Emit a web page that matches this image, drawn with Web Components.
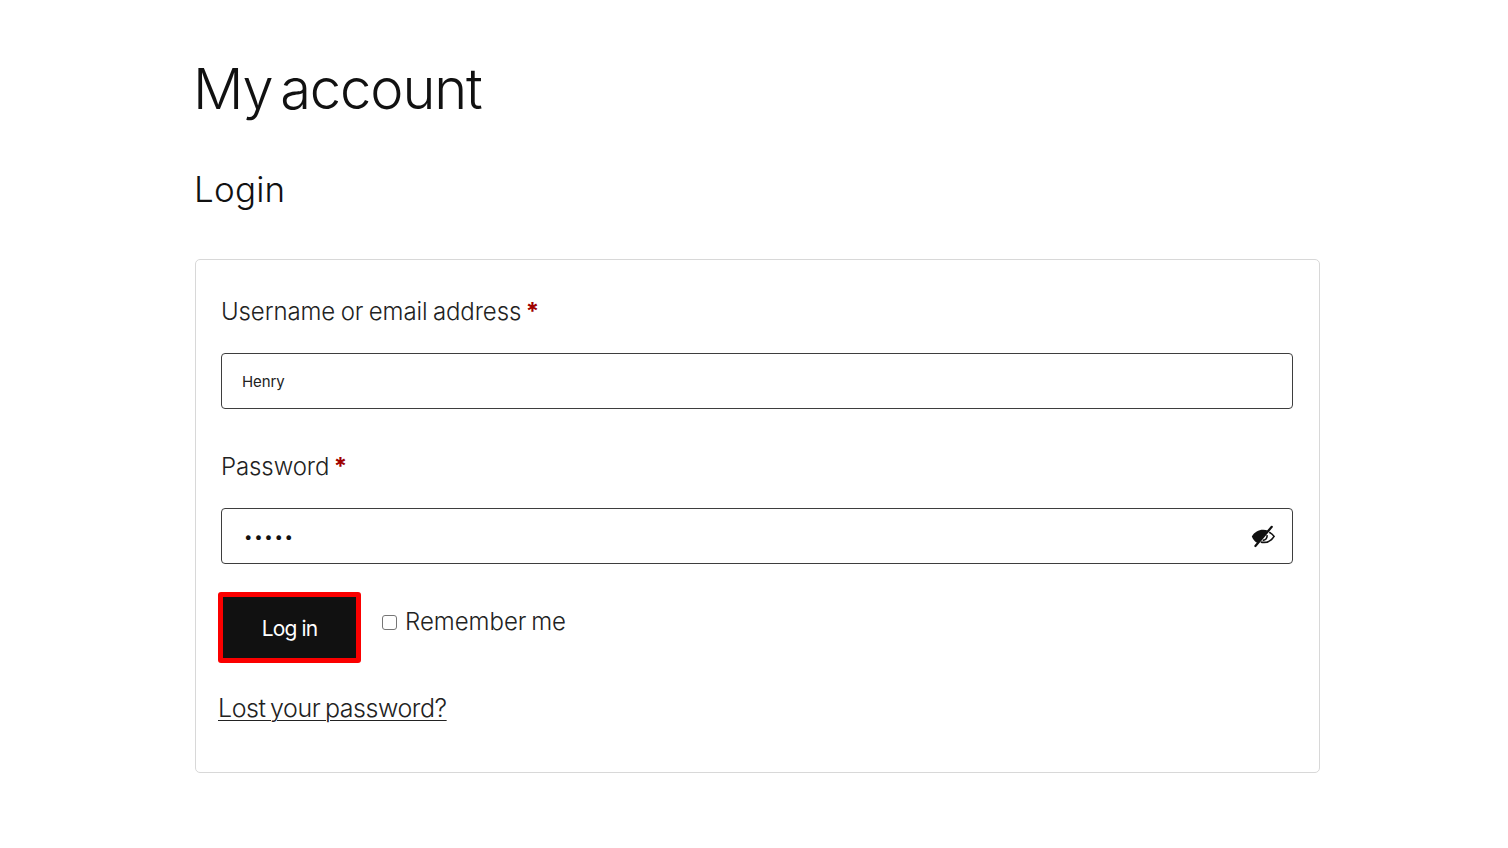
<!DOCTYPE html>
<html lang="en">
<head>
<meta charset="utf-8">
<title>My account</title>
<style>
    html, body { margin: 0; background: #fff; }
    body { font-family: Inter, "Liberation Sans", sans-serif; color: #111; }
</style>
</head>
<body>
<account-page>
    <login-card>
        <form-field label="Username or email address" value="Henry"></form-field>
        <form-field label="Password" type="password" value="•••••"></form-field>
        <login-actions></login-actions>
        <lost-link>Lost your password?</lost-link>
    </login-card>
</account-page>

<script>
// Page shell, the headings and the slot for the card
var templatePage = document.createElement('template')
templatePage.innerHTML = `
<style>
    :host {
        display: block;
        box-sizing: border-box;
        width: 1508px;
        height: 848px;
        padding: 56px 188px 0 195px;
        overflow: hidden;
    }
    h1 {
        margin: 0 0 0 -2px;
        font-size: 56px;
        line-height: 66px;
        font-weight: 300;
        letter-spacing: -1.1px;
        word-spacing: -7px;
        color: #111;
    }
    h2 {
        margin: 43px 0 0 -1px;
        font-size: 35px;
        line-height: 48px;
        font-weight: 300;
        letter-spacing: 0.2px;
        color: #111;
    }
    .cardslot { display: block; margin-top: 46px; }
</style>
<h1>My account</h1>
<h2>Login</h2>
<div class="cardslot"><slot></slot></div>
`

class AccountPage extends HTMLElement {
    constructor() {
        super()
        this.attachShadow({ mode: "open" }).appendChild(templatePage.content.cloneNode(true))
    }
}

var templateCard = document.createElement('template')
templateCard.innerHTML = `
<style>
    :host {
        display: block;
        box-sizing: border-box;
        width: 1125px;
        height: 514px;
        padding: 34px 26px 0 25px;
        border: 1px solid #d8d8d8;
        border-radius: 5px;
    }
</style>
<slot></slot>
`

class LoginCard extends HTMLElement {
    constructor() {
        super()
        this.attachShadow({ mode: "open" }).appendChild(templateCard.content.cloneNode(true))
    }
}

var templateField = document.createElement('template')
templateField.innerHTML = `
<style>
    :host {
        display: block;
        height: 155px;
    }
    label {
        display: block;
        font-size: 24px;
        line-height: 36px;
        font-weight: 300;
        letter-spacing: -0.1px;
        word-spacing: -1.2px;
        color: #222;
    }
    .req {
        color: #a00000;
        font-weight: 700;
        margin-left: -1px;
    }
    .box {
        display: flex;
        align-items: center;
        justify-content: space-between;
        box-sizing: border-box;
        width: 1072px;
        height: 56px;
        margin-top: 23px;
        padding: 0 17px 0 20px;
        border: 1px solid #3e3e3e;
        border-radius: 4px;
    }
    .value {
        font-size: 15px;
        letter-spacing: -0.1px;
        font-weight: 400;
        color: #222;
    }
    .value.dots {
        font-size: 15px;
        letter-spacing: 1.7px;
        padding-left: 2px;
        color: #111;
    }
    svg { display: none; width: 24px; height: 24px; }
    :host([type="password"]) svg { display: block; }
</style>
<label><span class="text"></span> <span class="req">*</span></label>
<div class="box">
    <span class="value"></span>
    <svg viewBox="0 0 24 24" aria-hidden="true">
        <path fill="#111" d="M0.800 12.400C3.500 7.900 7.800 5.600 12.200 5.700c1.700 0 3.200.3 4.600 .9L6.400 18.900C4 17.800 2.200 15.500.800 12.400z"/>
        <path fill="none" stroke="#111" stroke-width="1.600" d="M18.200 8.200c2 1 3.700 2.400 4.900 4.200-2.500 4-6.500 6.200-10.700 6-.9 0-1.800-.2-2.600-.5"/>
        <path fill="none" stroke="#111" stroke-width="1.600" d="M16 11.200c.6 2.800-1.300 5-4.300 5.200"/>
        <path fill="none" stroke="#111" stroke-width="2.200" stroke-linecap="round" d="M4.400 22L20.800 2.800"/>
    </svg>
</div>
`

class FormField extends HTMLElement {
    constructor() {
        super()
        this.shadow = this.attachShadow({ mode: "open" })
        this.shadow.appendChild(templateField.content.cloneNode(true))
    }

    connectedCallback() {
        this.shadow.querySelector('.text').textContent = this.getAttribute('label')
        let value = this.shadow.querySelector('.value')
        value.textContent = this.getAttribute('value')
        if (this.getAttribute('type') === 'password') {
            value.classList.add('dots')
        }
    }
}

var templateActions = document.createElement('template')
templateActions.innerHTML = `
<style>
    :host {
        display: flex;
        align-items: flex-start;
        gap: 21px;
        margin-left: -3px;
        margin-top: -12px;
    }
    button {
        box-sizing: border-box;
        width: 143px;
        height: 71px;
        padding: 1px 0 0;
        background: #111;
        border: 5px solid #fb0000;
        border-radius: 3px;
        color: #fff;
        font: 400 21px Inter, "Liberation Sans", sans-serif;
        letter-spacing: -0.9px;
    }
    .remember {
        display: flex;
        align-items: center;
        gap: 8px;
        height: 60px;
        font-size: 24px;
        line-height: 28px;
        font-weight: 300;
        letter-spacing: -0.02px;
        word-spacing: -2px;
        color: #222;
    }
    .check {
        box-sizing: border-box;
        width: 15px;
        height: 15px;
        border: 1px solid #767676;
        border-radius: 3px;
        background: #fff;
    }
</style>
<button type="button">Log in</button>
<div class="remember"><span class="check"></span><span>Remember me</span></div>
`

class LoginActions extends HTMLElement {
    constructor() {
        super()
        this.attachShadow({ mode: "open" }).appendChild(templateActions.content.cloneNode(true))
    }
}

var templateLink = document.createElement('template')
templateLink.innerHTML = `
<style>
    :host {
        display: block;
        margin: 27px 0 0 -3px;
        font-size: 25px;
        line-height: 36px;
        font-weight: 300;
        letter-spacing: -0.44px;
        word-spacing: -2px;
    }
    a { color: #222; text-decoration: underline; text-underline-offset: 3px; text-decoration-thickness: 1px; }
</style>
<a href="#"><slot></slot></a>
`

class LostLink extends HTMLElement {
    constructor() {
        super()
        this.attachShadow({ mode: "open" }).appendChild(templateLink.content.cloneNode(true))
    }
}

window.customElements.define('account-page', AccountPage)
window.customElements.define('login-card', LoginCard)
window.customElements.define('form-field', FormField)
window.customElements.define('login-actions', LoginActions)
window.customElements.define('lost-link', LostLink)
</script>
</body>
</html>
